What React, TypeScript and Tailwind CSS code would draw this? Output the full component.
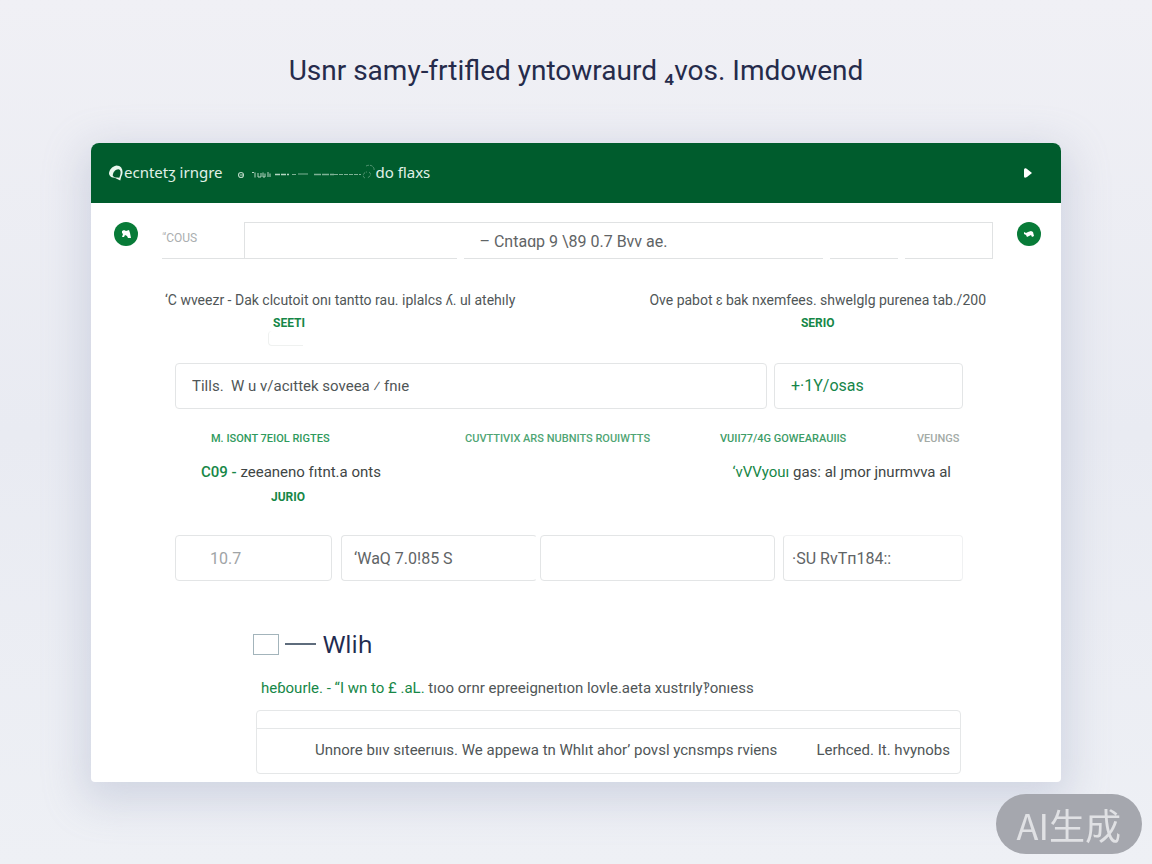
import React, { useState } from 'react';

const columnLabels = [
  { text: 'M. ISONT 7EIOL RIGTES', className: 'w-[254px] text-[#2f9a5d]' },
  { text: 'CUVTTIVIX ARS NUBNITS ROUIWTTS', className: 'w-[255px] text-[#4fa574]' },
  { text: 'VUII77/4G GOWEARAUIIS', className: 'w-[197px] text-[#3d9c67]' },
  { text: 'VEUNGS', className: 'text-[#a3aaa6]' },
];

const fieldClass = 'h-[46px] min-w-0 rounded border border-[#e3e5e6] bg-white outline-none';

const Logo: React.FC = () => (
  <svg width="15" height="18" viewBox="0 0 16 18" aria-hidden="true">
    <path d="M8 1C3 2 0 6 0 10c1 3 3 4 6 4l6 3 1-4c2-3 2-7 0-10-1-1-3-2-5-2Z" fill="#e9f7ee" />
    <path d="M4 12c0-4 3-7 6-7 2 0 3 3 2 6l-1 3c-3 0-6 0-7-2Z" fill="#005c2d" />
  </svg>
);

const HeaderTrail: React.FC = () => (
  <svg width="139" height="18" viewBox="0 0 139 18" fill="none" stroke="#b5d5c2" aria-hidden="true">
    <circle cx="4" cy="11" r="2.5" strokeWidth="1.2" />
    <path d="M3 11h3" />
    <path d="M15 8.5h2M18 8.5v5M21 9v4h3V9M26 8.5v4.5h2V9.5M31 8v5M33 9.5V13" />
    <path d="M38 10.5h14" strokeWidth="1.5" strokeDasharray="5 1" />
    <path d="M55 10.5h4M61 10h10" opacity=".7" />
    <path d="M77 10.5h20" strokeWidth="1.5" strokeDasharray="7 1" opacity=".7" />
    <path d="M97 10.5h27" strokeDasharray="4 1" opacity=".7" />
    <path d="M128 14c-3-1-2-6 2-6M129 2c4-2 9 0 8 5M132 8c3 2 1 5-2 6" strokeDasharray="3 1" opacity=".45" />
  </svg>
);

const RoundButton: React.FC<{ label: string; children: React.ReactNode }> = ({ label, children }) => (
  <button
    type="button"
    aria-label={label}
    className="flex h-6 w-6 shrink-0 items-center justify-center rounded-full bg-[#087b38]"
  >
    {children}
  </button>
);

const App: React.FC = () => {
  const [checked, setChecked] = useState(false);

  return (
    <div className="flow-root min-h-screen bg-[#eeeff5] bg-linear-to-b from-[#f0f0f5] via-[#e9ebf2] to-[#eef0f5] px-[91px] font-['Roboto','Liberation_Sans',sans-serif] text-sm text-[#505657]">
      <h1 className="mt-[51px] text-center text-[28px] leading-10 text-[#252b4b]">
        Usnr samy-frtifled yntowraurd ₄vos. Imdowend
      </h1>

      <main className="mt-[52px] overflow-hidden rounded-t-lg rounded-b bg-white pb-2 shadow-[0_12px_40px_8px_rgba(145,155,185,0.3)]">
        <header className="flex h-[60px] items-center bg-[#005c2d] px-[18px] font-['Noto_Sans',sans-serif] text-[15px] text-[#e1f1e7]">
          <Logo />
          <span>ecntetʒ irngre</span>
          <span className="ml-[14px]">
            <HeaderTrail />
          </span>
          <span>do flaxs</span>
          <button type="button" aria-label="Next" className="mr-[10px] ml-auto">
            <svg width="10" height="12" viewBox="0 0 10 12" fill="#ffffff">
              <path d="M1 3c0-2 2-2 3-1l5 4-5 4c-2 1-3 1-3-1Z" />
            </svg>
          </button>
        </header>

        <div className="flex items-start pt-[19px] pr-5 pl-[23px]">
          <RoundButton label="Account">
            <svg width="12" height="10" viewBox="0 0 12 10" fill="#ffffff">
              <path d="M2 2 4 1l2 1 3-1 1 3 1 5H8L7 7 5 6 4 8H2l1-3-1-1Z" />
            </svg>
          </RoundButton>
          <div className="mr-6 ml-6 min-w-0 flex-1">
            <div className="flex">
              <label htmlFor="focus" className="w-[82px] pt-2 text-xs leading-4 text-[#aaaeb0]">
                <span className="opacity-60">‘</span>‘COUS
              </label>
              <input
                id="focus"
                defaultValue="– Cntaɑp 9 \89 0.7 Bvv ae."
                className="h-[36px] min-w-0 flex-1 border border-b-0 border-[#e0e2e3] pt-[2px] pr-[90px] text-center text-base text-[#5f6466] outline-none"
              />
            </div>
            <div className="flex gap-[7px]">
              <div className="h-px w-[295px] bg-[#e0e2e3]" />
              <div className="h-px flex-1 bg-[#e0e2e3]" />
              <div className="h-px w-[68px] bg-[#e0e2e3]" />
              <div className="h-px w-[88px] bg-[#e0e2e3]" />
            </div>
          </div>
          <RoundButton label="Activity">
            <svg width="12" height="10" viewBox="0 0 12 10" fill="#ffffff">
              <path d="m1 3 2 1 2-1 3-1 2 1 1 4-2 1-1-2-2 1-2 1-1-2-2-1Z" />
            </svg>
          </RoundButton>
        </div>

        <section className="flex justify-between pt-[31px] pr-[75px] pl-[74px] leading-5">
          <div className="flex flex-col">
            <p>‘C wveezr - Dak clcutoit onı tantto rau. iplalcs ʎ. ul atehıly</p>
            <button type="button" className="mt-px ml-[108px] self-start text-xs leading-6 font-bold text-[#168747]">
              SEETI
            </button>
            <div className="-mt-1 ml-[103px] h-[15px] w-[35px] rounded-l border-b border-l border-[#eff1f0]" />
          </div>
          <div className="flex flex-col">
            <p>Ove pabot ɛ bak nxemfees. shwelglg purenea tab./200</p>
            <button type="button" className="mt-px self-center text-xs leading-6 font-bold text-[#168747]">
              SERIO
            </button>
          </div>
        </section>

        <section className="pt-[17px] pr-[98px] pl-[84px]">
          <div className="flex gap-[7px]">
            <input
              aria-label="Title"
              defaultValue="Tills.  W u v/acıttek soveea ⁄ fnıe"
              className={`${fieldClass} flex-1 px-4 text-[15px] text-[#505657]`}
            />
            <button type="button" className={`${fieldClass} w-[189px] px-4 text-left text-base text-[#16854a]`}>
              +·1Y/osas
            </button>
          </div>

          <div className="flex pt-[22px] pl-9 text-[11px] leading-4 font-medium whitespace-nowrap">
            {columnLabels.map(col => (
              <span key={col.text} className={col.className}>{col.text}</span>
            ))}
          </div>

          <div className="flex justify-between pt-[15px] pr-3 pl-[26px] text-[15px] leading-5 text-[#3f4645]">
            <p><span className="font-medium text-[#168747]">C09 -</span> zeeaneno fıtnt.a onts</p>
            <p><span className="text-[#168747]">‘vVVyouı</span> gas: al ȷmor jnurmvva al</p>
          </div>
          <button type="button" className="mt-[3px] ml-24 block text-xs leading-6 font-bold text-[#168747]">
            JURIO
          </button>

          <div className="mt-[26px] flex text-base text-[#5f6466]">
            <input aria-label="Rate" defaultValue="10.7" className={`${fieldClass} w-[157px] pl-[34px] text-[#a0a4a6]`} />
            <input aria-label="Value" defaultValue="‘WaQ 7.0!85 S" className={`${fieldClass} ml-[9px] w-[196px] border-r-transparent pl-3`} />
            <input aria-label="Detail" className={`${fieldClass} ml-[3px] flex-1 px-3`} />
            <input aria-label="Survey" defaultValue="·SU RvTп184::" className={`${fieldClass} ml-2 w-[180px] border-t-[#f0f1f2] border-r-[#f0f1f2] pl-2`} />
          </div>
        </section>

        <section className="pt-[45px] pr-[100px] pl-[162px]">
          <label className="flex items-center text-2xl leading-9 text-[#222b50]">
            <input
              type="checkbox"
              checked={checked}
              onChange={e => setChecked(e.target.checked)}
              className="h-[21px] w-[26px] appearance-none border border-[#a3b4bb] checked:bg-[#168747]"
            />
            <span className="mr-[7px] ml-[6px] h-[2px] w-[31px] bg-[#5e6c7c]" />
            <span className="font-['Noto_Sans',sans-serif]">Wlih</span>
          </label>
          <p className="pt-4 pl-2 text-[15px] leading-5">
            <span className="text-[#168747]">heɓourle. - “I wn to £ .aL.</span> tıoo ornr epreeigneıtıon lovle.aeta xustrıly‽onıess
          </p>
          <div className="mt-3 ml-[3px] rounded border border-[#e5e7e8]">
            <div className="h-[18px] border-b border-[#e5e7e8]" />
            <div className="flex h-11 items-center justify-between pr-[10px] pl-[58px] text-[15px]">
              <span>Unnore bııv sıteerıuıs. We appewa tn Whlıt ahor’ povsl ycnsmps rviens</span>
              <span>Lerhced. It. hvynobs</span>
            </div>
          </div>
        </section>
      </main>

      <div className="fixed right-[10px] bottom-[10px] rounded-full bg-[#a5a7ae] px-[21px] py-[6px] font-['Noto_Sans_CJK_SC',sans-serif] text-4xl leading-12 text-[#e0e1e4]">
        AI生成
      </div>
    </div>
  );
};

export default App;
